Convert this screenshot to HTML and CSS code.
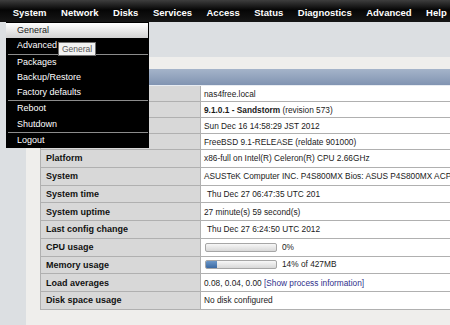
FILE: index.html
```html
<!DOCTYPE html>
<html lang="en">
<head>
  <meta charset="UTF-8">
  <title>nas4free.local - System information</title>
  <link rel="stylesheet" href="styles.css">
</head>
<body>
<div class="topnav">
  <ul class="menubar">
    <li>System</li>
    <li>Network</li>
    <li>Disks</li>
    <li>Services</li>
    <li>Access</li>
    <li>Status</li>
    <li>Diagnostics</li>
    <li>Advanced</li>
    <li>Help</li>
  </ul>
</div>

<div class="page">
  <div class="panel">
    <table class="info">
      <tr class="titleRow"><td colspan="2">System information</td></tr>
      <tr class="brief"><td class="label">Hostname</td><td class="value">nas4free.local</td></tr>
      <tr class="brief"><td class="label">Version</td><td class="value"><b>9.1.0.1 - Sandstorm</b> (revision 573)</td></tr>
      <tr class="brief"><td class="label">Built date</td><td class="value">Sun Dec 16 14:58:29 JST 2012</td></tr>
      <tr class="brief"><td class="label">Operating system</td><td class="value">FreeBSD 9.1-RELEASE (reldate 901000)</td></tr>
      <tr><td class="label">Platform</td><td class="value">x86-full on Intel(R) Celeron(R) CPU 2.66GHz</td></tr>
      <tr><td class="label">System</td><td class="value">ASUSTeK Computer INC. P4S800MX Bios: ASUS P4S800MX ACPI</td></tr>
      <tr><td class="label">System time</td><td class="value"><span class="lead"></span>Thu Dec 27 06:47:35 UTC 201</td></tr>
      <tr><td class="label">System uptime</td><td class="value">27 minute(s) 59 second(s)</td></tr>
      <tr><td class="label">Last config change</td><td class="value"><span class="lead"></span>Thu Dec 27 6:24:50 UTC 2012</td></tr>
      <tr><td class="label">CPU usage</td><td class="value"><span class="bar"></span>0%</td></tr>
      <tr><td class="label">Memory usage</td><td class="value"><span class="bar"><span class="fill" style="width: 16%"></span></span>14% of 427MB</td></tr>
      <tr><td class="label">Load averages</td><td class="value">0.08, 0.04, 0.00 <a class="link" href="#">[Show process information]</a></td></tr>
      <tr><td class="label">Disk space usage</td><td class="value">No disk configured</td></tr>
    </table>
  </div>
</div>

<!-- System dropdown, opened -->
<ul class="dropdown">
  <li class="hover">General</li>
  <li>Advanced</li>
  <li class="sep"></li>
  <li>Packages</li>
  <li>Backup/Restore</li>
  <li>Factory defaults</li>
  <li class="sep"></li>
  <li>Reboot</li>
  <li>Shutdown</li>
  <li class="sep"></li>
  <li>Logout</li>
</ul>
<span class="tip">General</span>
</body>
</html>
```

FILE: styles.css
```css
*{
  margin: 0;
  padding: 0;
}
html,body{
  width: 100%;
  height: 100%;
  overflow: hidden;
  background-color: #dcdfe2;
  font-family: "Liberation Sans", Arial, sans-serif;
}
ul{
  list-style: none;
}
/*顶部菜单*/
.topnav{
  height: 22px;
  background: linear-gradient(#3e3e3e, #060606 45%, #161616);
}
.menubar{
  display: flex;
  padding-left: 5.5px;
}
.menubar li{
  padding: 0 7.25px;
  line-height: 26px;
  height: 22px;
  font-size: 9.5px;
  font-weight: bold;
  color: #fff;
  white-space: nowrap;
}
/*内容区域*/
.page{
  padding: 35px 0 0 26px;
  height: calc(100% - 22px);
  box-sizing: border-box;
}
.panel{
  height: 100%;
  background-color: #efeeec;
  padding: 12px 0 0 14px;
  box-sizing: border-box;
  overflow: hidden;
}
.info{
  width: 440px;
  border-collapse: separate;
  border-spacing: 0;
  font-size: 8.3px;
  border-left: 1px solid #b0b0b0;
}
.info td{
  white-space: nowrap;
  border-bottom: 1px solid #b0b0b0;
  padding: 0;
}
.info tr{
  height: 17.75px;
}
.info tr.brief{
  height: 16px;
}
.info .titleRow{
  height: 17px;
}
.info .titleRow td{
  background: linear-gradient(#a5b4ca, #8194b2);
  color: #fff;
  font-weight: bold;
  padding-left: 5px;
  border-bottom: 1px solid #e8ecf2;
}
.info .label{
  width: 154px;
  padding-left: 5px;
  background-color: #d8d8d8;
  font-size: 9px;
  font-weight: bold;
  color: #111;
  border-right: 1px solid #b0b0b0;
}
.info .value{
  padding-left: 3px;
  background-color: #fff;
  color: #1a1a1a;
}
.lead{
  display: inline-block;
  width: 3px;
}
/*进度条*/
.bar{
  display: inline-block;
  vertical-align: middle;
  width: 70px;
  height: 7px;
  margin: 0 5px 1px 1px;
  border: 1px solid #a6a6a6;
  border-radius: 2px;
  background: linear-gradient(#f7f7f7, #d8d8d8);
  overflow: hidden;
}
.fill{
  display: block;
  height: 100%;
  background: linear-gradient(#6c97c8, #3c6aa3);
}
.link{
  color: #30308a;
  text-decoration: none;
}
/*下拉菜单*/
.dropdown{
  position: absolute;
  left: 6px;
  top: 22px;
  width: 143px;
  padding-top: 1px;
  background-color: #000;
}
.dropdown li{
  line-height: 15.25px;
  height: 15.25px;
  padding-left: 11px;
  font-size: 9px;
  color: #fff;
}
.dropdown li.hover{
  margin-right: 1px;
  background: linear-gradient(#ffffff, #d2d2d2);
  color: #1a1a1a;
}
.dropdown li.sep{
  height: 1px;
  padding: 0;
  margin: 0 1px 0 2px;
  background-color: #8c8c8c;
}
/*提示框*/
.tip{
  position: absolute;
  left: 58px;
  top: 42px;
  height: 12px;
  padding: 0 3px;
  line-height: 13px;
  font-size: 8.5px;
  color: #555;
  background-color: #f2f2f2;
  border: 1px solid #6f6f6f;
}
```
